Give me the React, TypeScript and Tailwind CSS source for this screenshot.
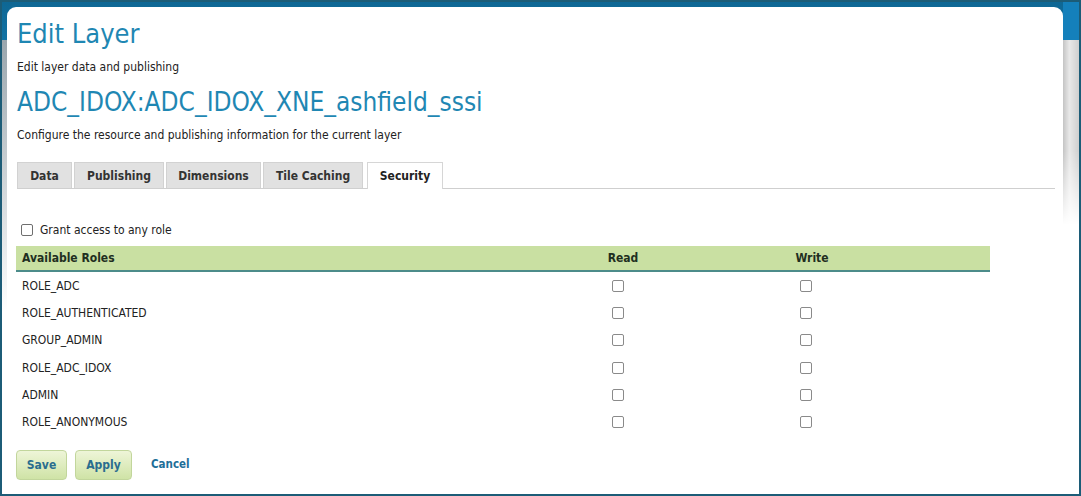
import React from "react";

const roles = [
  "ROLE_ADC",
  "ROLE_AUTHENTICATED",
  "GROUP_ADMIN",
  "ROLE_ADC_IDOX",
  "ADMIN",
  "ROLE_ANONYMOUS",
];

const tabs = [
  { label: "Data", w: "w-[55px]" },
  { label: "Publishing", w: "w-[90px]" },
  { label: "Dimensions", w: "w-[95px]" },
  { label: "Tile Caching", w: "w-[100px]" },
];

function Box() {
  return <span className="block w-[12px] h-[12px] border border-[#8a8a8a] rounded-[2px] bg-white" />;
}

export default function App() {
  return (
    <div
      className="w-[1081px] h-[496px] overflow-hidden border-2 border-[#1c5c77] bg-[linear-gradient(to_bottom,#0e6794_0px,#1173a5_40px,#ffffff_40px)] flex text-[12px] text-[#222]"
      style={{ fontFamily: "'DejaVu Sans Condensed', 'Liberation Sans', sans-serif" }}
    >
      {/* left window edge */}
      <div className="w-[5px] flex flex-col">
        <div className="h-[38px]" />
        <div className="flex-1 bg-[linear-gradient(to_bottom,#9aa6ad,#ffffff_60%)]" />
      </div>

      {/* main panel */}
      <div className="flex-1 mt-[5px] bg-white rounded-t-[9px] pl-[10px] pt-[11px]">
        <h1 className="text-[27px] leading-[32px] text-[#1f87b3]">Edit Layer</h1>
        <p className="mt-[9px] leading-[16px]">Edit layer data and publishing</p>
        <h2 className="mt-[11px] text-[26px] leading-[32px] text-[#1f87b3]">ADC_IDOX:ADC_IDOX_XNE_ashfield_sssi</h2>
        <p className="mt-[9px] leading-[16px]">Configure the resource and publishing information for the current layer</p>

        {/* tabs */}
        <div className="mt-[19px] mr-[8px] flex items-end gap-[2px] border-b border-[#cfcfcf]">
          {tabs.map((t) => (
            <div
              key={t.label}
              className={`${t.w} h-[26px] flex items-center justify-center bg-[#e1e1e1] border border-b-0 border-[#d2d2d2] font-bold text-[#333]`}
            >
              {t.label}
            </div>
          ))}
          <div className="ml-[2px] w-[76px] h-[27px] -mb-px flex items-center justify-center bg-white border border-b-0 border-[#d6d6d6] font-bold text-[#222]">
            Security
          </div>
        </div>

        {/* grant access */}
        <label className="mt-[33px] flex items-center gap-[7px] pl-[4px] leading-[16px]">
          <span className="block w-[12px] h-[12px] border border-[#6f6f6f] rounded-[2px] bg-white" />
          <span>Grant access to any role</span>
        </label>

        {/* roles table */}
        <div className="mt-[8px] w-[974px] -ml-[1px]">
          <div className="grid grid-cols-[557px_100px_278px_1fr] h-[26px] items-center bg-[#c9e0a2] border-b-2 border-[#4c8c8a] font-bold text-[#1f2f1f]">
            <div className="pl-[6px]">Available Roles</div>
            <div className="text-center">Read</div>
            <div className="text-center">Write</div>
            <div />
          </div>
          {roles.map((r) => (
            <div key={r} className="grid grid-cols-[557px_100px_278px_1fr] h-[27.3px] items-center">
              <div className="pl-[6px]">{r}</div>
              <div className="flex justify-center pr-[10px]"><Box /></div>
              <div className="flex justify-center pr-[12px]"><Box /></div>
              <div />
            </div>
          ))}
        </div>

        {/* buttons */}
        <div className="mt-[14px] -ml-[1px] flex items-center gap-[8px]">
          <button className="w-[51px] h-[30px] rounded-[4px] border border-[#c2d69c] bg-[linear-gradient(to_bottom,#eef5d8,#cfe3a6)] font-bold text-[#2a6d8f]">
            Save
          </button>
          <button className="w-[57px] h-[30px] rounded-[4px] border border-[#c2d69c] bg-[linear-gradient(to_bottom,#eef5d8,#cfe3a6)] font-bold text-[#2a6d8f]">
            Apply
          </button>
          <span className="ml-[11px] font-bold text-[#1f6f99] text-[11.5px]">Cancel</span>
        </div>
      </div>

      {/* right window edge */}
      <div className="w-[16px] flex flex-col">
        <div className="h-[38px] bg-[#1480bb]" />
        <div className="h-[185px] bg-[linear-gradient(to_right,#c4c4c4,#e8e8e8_40%,#cfcfcf)] [mask-image:linear-gradient(to_bottom,black_60%,transparent)]" />
      </div>
    </div>
  );
}
